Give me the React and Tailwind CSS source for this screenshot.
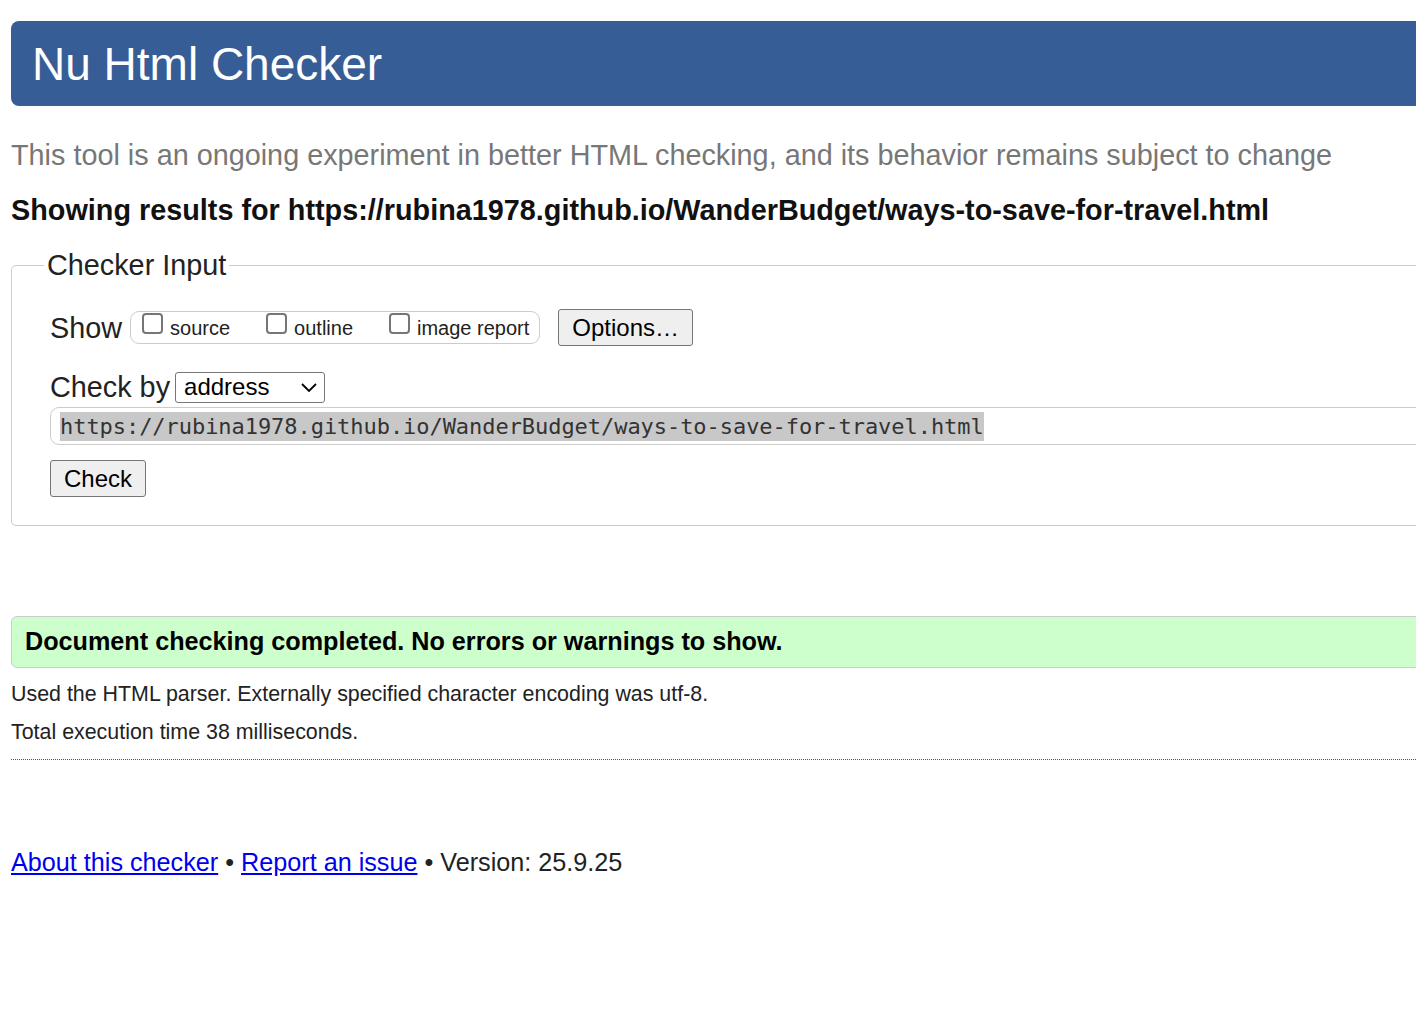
export default function App() {
  return (
    <div className="w-full min-h-screen overflow-hidden bg-white font-['Liberation_Sans',Arial,sans-serif] text-[#222]">
      <div className="w-[1460px] pl-[11px] pt-[21px]">
        <header className="h-[85px] rounded-l-[8px] bg-[#365d95] flex items-center pl-[21px]">
          <h1 className="text-[46px] leading-none text-white font-normal">Nu Html Checker</h1>
        </header>

        <p className="mt-[32px] text-[28.8px] leading-[34px] text-[#777]">
          This tool is an ongoing experiment in better HTML checking, and its behavior remains subject to change
        </p>
        <p className="mt-[21px] text-[28.8px] leading-[34px] font-bold text-[#111]">
          Showing results for https://rubina1978.github.io/WanderBudget/ways-to-save-for-travel.html
        </p>

        <fieldset className="mt-[22px] border border-[#ccc] rounded-[5px] pl-[38px] pb-[28px] pt-[28px]">
          <legend className="-ml-[6px] px-[3px] text-[28.8px] leading-[32px] text-[#222]">Checker Input</legend>

          <div className="flex items-center">
            <span className="text-[28.8px] leading-[32px] mr-[8px]">Show</span>
            <div className="flex items-center h-[33px] border border-[#ccc] rounded-[9px] pl-[11px] pr-[10px] gap-[36px]">
              <label className="flex items-center">
                <span className="w-[21px] h-[21px] border-2 border-[#767676] rounded-[4px] -mt-[8px] mr-[7px]"></span>
                <span className="text-[20px] text-[#222]">source</span>
              </label>
              <label className="flex items-center">
                <span className="w-[21px] h-[21px] border-2 border-[#767676] rounded-[4px] -mt-[8px] mr-[7px]"></span>
                <span className="text-[20px] text-[#222]">outline</span>
              </label>
              <label className="flex items-center">
                <span className="w-[21px] h-[21px] border-2 border-[#767676] rounded-[4px] -mt-[8px] mr-[7px]"></span>
                <span className="text-[20px] text-[#222]">image report</span>
              </label>
            </div>
            <button className="ml-[18px] h-[37px] px-[13px] bg-[#efefef] border border-[#767676] rounded-[3px] text-[24px] leading-none text-black">
              Options…
            </button>
          </div>

          <div className="flex items-center mt-[25px]">
            <span className="text-[28.8px] leading-[32px] mr-[5px]">Check by</span>
            <div className="flex items-center justify-between w-[150px] h-[31px] border border-[#767676] rounded-[3px] pl-[8px] pr-[6px] text-[24px] leading-none text-black">
              <span>address</span>
              <svg width="18" height="12" viewBox="0 0 18 12" fill="none" stroke="#000" strokeWidth="1.8">
                <path d="M2 3l7 7 7-7" />
              </svg>
            </div>
          </div>

          <div className="mt-[4px] h-[38px] border border-[#ccc] rounded-l-[9px] flex items-center pl-[9px]">
            <span className="bg-[#c8c8c8] font-['DejaVu_Sans_Mono',monospace] text-[22px] leading-[29px] text-[#333] tracking-[-0.05px]">
              https://rubina1978.github.io/WanderBudget/ways-to-save-for-travel.html
            </span>
          </div>

          <button className="mt-[15px] h-[37px] px-[13px] bg-[#efefef] border border-[#767676] rounded-[3px] text-[24px] leading-none text-black">
            Check
          </button>
        </fieldset>

        <div className="mt-[90px] h-[52px] border border-[#ccc] rounded-l-[6px] bg-[#ccffcc] flex items-center pl-[13px]">
          <span className="text-[25.2px] font-bold text-black">Document checking completed. No errors or warnings to show.</span>
        </div>

        <p className="mt-[14px] text-[21.4px] leading-[25px] text-[#222]">
          Used the HTML parser. Externally specified character encoding was utf-8.
        </p>
        <p className="mt-[13px] text-[21.4px] leading-[25px] text-[#222]">Total execution time 38 milliseconds.</p>
        <div className="mt-[14px] border-t border-dotted border-[#555]"></div>

        <p className="mt-[88px] text-[25.2px] leading-[28px] text-[#222]">
          <a href="#" className="text-[#0000ee] underline">About this checker</a>
          {" • "}
          <a href="#" className="text-[#0000ee] underline">Report an issue</a>
          {" • Version: 25.9.25"}
        </p>
      </div>
    </div>
  );
}
